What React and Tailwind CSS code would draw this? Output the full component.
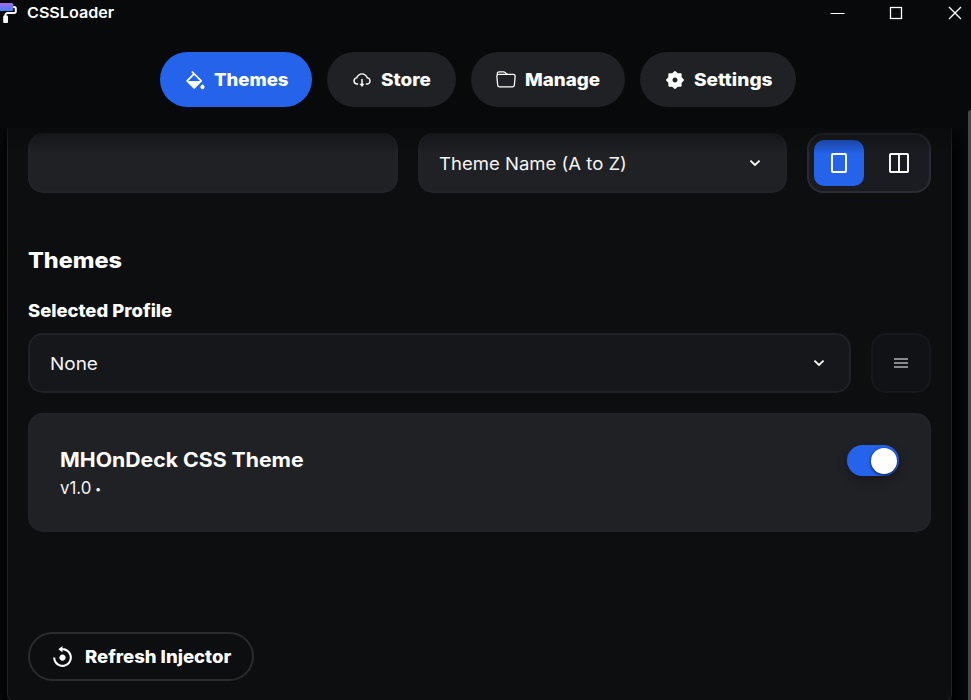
import { RiPaintFill, RiSettings2Fill } from "react-icons/ri";
import { AiOutlineCloudDownload } from "react-icons/ai";
import { BsFolder } from "react-icons/bs";
import { BiReset } from "react-icons/bi";

// Wide geometric lettering: `stretch` widens the glyphs, `width` is the space they take.
function Text({ children, width, stretch, className = "" }) {
  return (
    <span className={`block whitespace-nowrap ${className}`} style={{ width }}>
      <span className="inline-block origin-left" style={{ transform: `scaleX(${stretch})` }}>
        {children}
      </span>
    </span>
  );
}

const tabs = [
  { label: "Themes", Icon: RiPaintFill, width: 74, stretch: 1.06, active: true },
  { label: "Store", Icon: AiOutlineCloudDownload, width: 51, stretch: 1.08 },
  { label: "Manage", Icon: BsFolder, width: 76, stretch: 1.075 },
  { label: "Settings", Icon: RiSettings2Fill, width: 78, stretch: 1.09 },
];

function Logo() {
  return (
    <svg width="17" height="24" viewBox="0 0 17 24" fill="none">
      <defs>
        <linearGradient id="roller" x1="0" y1="0" x2="0" y2="1">
          <stop offset="0" stopColor="#a968e8" />
          <stop offset="1" stopColor="#3d83f5" />
        </linearGradient>
      </defs>
      <path d="M13 7h1.2a1.6 1.6 0 0 1 1.6 1.6v2.8a1.6 1.6 0 0 1-1.6 1.6H7.6a2.2 2.2 0 0 0-2.2 2.2v1.5" stroke="#fff" strokeWidth="2" />
      <rect x="-3" y="3" width="16.3" height="8" rx="1.6" fill="url(#roller)" />
      <rect x="3.2" y="15.6" width="4.8" height="7.4" rx="1" fill="#fff" />
    </svg>
  );
}

function TitleBar() {
  return (
    <div className="flex h-[26px] shrink-0 items-start justify-between">
      <div className="flex h-6 items-center">
        <Logo />
        <Text width={87} stretch={1.075} className="ml-[9.5px] pt-px text-[15px] leading-6 font-semibold">
          CSSLoader
        </Text>
      </div>
      <div className="flex items-center gap-[43px] pt-[5px] pr-[8px]">
        <svg width="16" height="16" viewBox="0 0 16 16" stroke="#fff">
          <path d="M1.5 8.5h14" />
        </svg>
        <svg width="16" height="16" viewBox="0 0 16 16" stroke="#fff" strokeWidth="1.3" fill="none">
          <rect x="2.5" y="2.5" width="11" height="11" />
        </svg>
        <svg width="16" height="16" viewBox="0 0 16 16" stroke="#fff" strokeWidth="1.4">
          <path d="M2 2l12 12M14 2L2 14" />
        </svg>
      </div>
    </div>
  );
}

function Chevron() {
  return (
    <svg width="12" height="8" viewBox="0 0 12 8" fill="none" stroke="#fff" strokeWidth="1.8">
      <path d="M1.4 1.6L6 6l4.6-4.4" />
    </svg>
  );
}

export default function App() {
  return (
    <div className="flex h-[700px] w-[971px] flex-col overflow-hidden bg-[#08090b] font-['Inter','Liberation_Sans',sans-serif] text-white">
      <TitleBar />
      <nav className="flex h-[102px] shrink-0 gap-[15px] pt-[26px] pl-[160px]">
        {tabs.map(({ label, Icon, width, stretch, active }) => (
          <button
            key={label}
            className={`flex h-[55px] items-center gap-2 rounded-full px-[25px] ${active ? "bg-[#2563eb]" : "bg-[#202124]"}`}
          >
            <Icon size={20} className="shrink-0" />
            <Text width={width} stretch={stretch} className="pl-px text-left text-[17.5px] leading-6 font-extrabold">
              {label}
            </Text>
          </button>
        ))}
      </nav>
      <div className="relative flex h-[572px] shrink-0">
        <div className="w-[7px] bg-linear-to-r from-[#070709] to-[#020202]" />
        <main className="-mt-4 h-[590px] w-[945px] rounded-b-lg border border-t-0 border-[#232428] bg-[#0d0e10] px-5 pt-[21px]">
          <div className="flex h-[60px] gap-5">
            <div className="w-[370px] rounded-[15px] border-2 border-[#222328] bg-[#202124]" />
            <div className="flex w-[369px] items-center justify-between rounded-[15px] border-2 border-[#222328] bg-[#202124] pr-[24px] pl-[19px]">
              <Text width={187} stretch={1.065} className="pt-[2px] text-[17.4px] leading-6 text-[#f4f4f5]">
                Theme Name (A to Z)
              </Text>
              <Chevron />
            </div>
            <div className="flex w-[124px] gap-[10px] rounded-[16px] border-2 border-[#2b2b33] bg-[#1b1c21] p-[5px]">
              <div className="flex w-[50px] items-center justify-center rounded-[10px] bg-[#2563eb]">
                <svg width="16" height="20" viewBox="0 0 16 20" fill="none" stroke="#fff" strokeWidth="1.9">
                  <rect x="1" y="1" width="14" height="18" rx="0.8" />
                </svg>
              </div>
              <div className="flex w-[50px] items-center justify-center">
                <svg width="20" height="20" viewBox="0 0 20 20" fill="none" stroke="#fff" strokeWidth="1.9">
                  <rect x="1" y="1" width="18" height="18" rx="0.8" />
                  <path d="M10 1v18" />
                </svg>
              </div>
            </div>
          </div>
          <h1 className="mt-[51px] h-8">
            <Text width={94} stretch={1.065} className="text-[22px] leading-8 font-extrabold">
              Themes
            </Text>
          </h1>
          <h2 className="mt-[23px] h-6">
            <Text width={145} stretch={1.06} className="text-[17.4px] leading-6 font-extrabold">
              Selected Profile
            </Text>
          </h2>
          <div className="mt-[10px] flex h-[60px] gap-5">
            <div className="flex w-[823px] items-center justify-between rounded-[15px] border-2 border-[#202126] bg-[#16171b] pr-[24px] pl-5">
              <Text width={48} stretch={1.09} className="pt-[2px] text-[17.4px] leading-6 text-[#f4f4f5]">
                None
              </Text>
              <Chevron />
            </div>
            <div className="flex w-[60px] flex-col items-center justify-center gap-[2px] rounded-[15px] border-2 border-[#17181c] bg-[#111216]">
              <div className="h-[2px] w-[14px] bg-[#88898b]" />
              <div className="h-[2px] w-[14px] bg-[#88898b]" />
              <div className="h-[2px] w-[14px] bg-[#88898b]" />
            </div>
          </div>
          <section className="mt-5 flex h-[119px] justify-between rounded-[15px] border-2 border-[#222328] bg-[#202124] px-[30px] pt-[30px]">
            <div>
              <Text width={244} stretch={1.095} className="text-[19.4px] leading-[30px] font-bold">
                MHOnDeck CSS Theme
              </Text>
              <div className="flex h-[26px] items-center">
                <Text width={35} stretch={0.97} className="text-[17.4px] leading-[26px] text-[#f4f4f5]">
                  v1.0
                </Text>
                <span className="pt-px text-[11px] leading-[26px] text-[#f4f4f5]">•</span>
              </div>
            </div>
            <div className="flex h-[31px] w-[52px] items-center justify-end rounded-full bg-[#2563eb] pr-[2px] shadow-[0_4px_10px_rgba(0,0,0,0.3)]">
              <div className="size-[26px] rounded-full bg-white shadow-[0_1px_3px_rgba(0,0,0,0.8)]" />
            </div>
          </section>
          <button className="mt-[100px] flex h-[49px] w-[226px] items-center gap-[10px] rounded-full border-2 border-[#2b2b2d] pl-[20px]">
            <BiReset size={25} className="shrink-0" />
            <Text width={147} stretch={1.065} className="text-left text-[17.4px] leading-6 font-extrabold">
              Refresh Injector
            </Text>
          </button>
        </main>
        <div className="w-[16px] bg-linear-to-r from-[#020202] to-[#08090b]" />
        <div className="-mt-[18px] h-[590px] w-[3px] rounded-tl-[3px] bg-[#484747]" />
        <div className="pointer-events-none absolute top-[-16px] left-0 h-4 w-[968px] bg-[#08090b]" />
        <div className="pointer-events-none absolute top-0 left-0 h-[26px] w-[968px] bg-linear-to-b from-[#08090b]/60 to-[#08090b]/0" />
      </div>
    </div>
  );
}
